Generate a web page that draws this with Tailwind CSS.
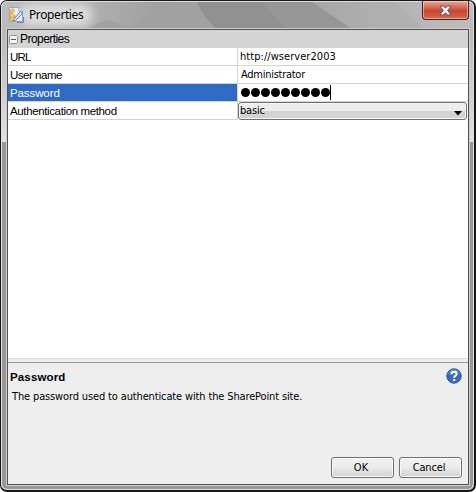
<!DOCTYPE html>
<html lang="en">
<head>
<meta charset="utf-8">
<title>Properties</title>
<script src="https://cdn.jsdelivr.net/npm/@tailwindcss/browser@4"></script>
</head>
<body class="w-[476px] h-[492px] overflow-hidden bg-white text-black font-['DejaVu_Sans_Condensed','DejaVu_Sans',sans-serif] [font-stretch:condensed] text-[11px]">
<div class="relative isolate w-[476px] h-[492px] rounded-[7px] border border-[#171717] border-r-2 border-b-2 overflow-hidden flex flex-col bg-[#999]">
  <!-- glass frame -->
  <svg class="absolute inset-0 -z-10" width="473" height="489" viewBox="1 1 473 489">
    <defs>
      <linearGradient id="top" x1="0" x2="1"><stop offset="0" stop-color="#bcbcbc"/><stop offset=".22" stop-color="#acacac"/><stop offset=".4" stop-color="#999"/><stop offset=".62" stop-color="#959595"/><stop offset=".8" stop-color="#b2b2b2"/><stop offset="1" stop-color="#bdbdbd"/></linearGradient>
      <linearGradient id="side" x1="0" x2="0" y1="0" y2="1"><stop offset="0" stop-color="#b8b8b8"/><stop offset="1" stop-color="#e3e1e1"/></linearGradient>
      <filter id="soft" x="-20%" y="-50%" width="140%" height="200%"><feGaussianBlur stdDeviation="5"/></filter>
    </defs>
    <rect width="476" height="30" fill="url(#top)"/>
    <path d="M85 29 106 20 130 26 155 12 176 2 197 2 215 29Z" fill="#a1a1a1"/>
    <path d="M197 2H262L285 29H217Q203 17 197 2Z" fill="#909090"/>
    <path d="M262 2H312L352 29H285Z" fill="#969696"/>
    <path d="M312 2H395L425 29H352Z" fill="#adadad" opacity=".65"/>
    <rect x="20" y="4" width="72" height="22" rx="9" fill="#dedede" filter="url(#soft)"/>
    <path d="M1 29H8V142H1ZM468 29H475V142H468Z" fill="url(#side)"/>
    <path d="M1 142H8V492H1ZM468 142H475V492H468ZM1 484H475V492H1Z" fill="#999797"/>
    <path d="M1.500 484V8Q2 1.500 8 1.500H468Q473.500 2 473.500 8V483Q473 489.500 467 489.500H8Q2 489 1.500 484" fill="none" stroke="#dedede"/>
    <path d="M6.500 28.500H469.500V485.500H6.500Z" fill="none" stroke="#cecece"/>
  </svg>

  <header class="h-[28px] shrink-0 flex justify-between pl-[7px]">
    <div class="flex pt-[5px]">
      <svg width="17" height="18" viewBox="0 0 17 18">
        <path d="M1.500 1.500H11L14.500 5V15.500H1.500Z" fill="#e7edf8" stroke="#9aa5c2"/>
        <path d="M11 1.500V5H14.500" fill="#fff" stroke="#8797c1"/>
        <path d="M2 4 5 2 7 5 5 7 8 10 6 13 8 15H2Z" fill="#f3ad4e"/>
        <path d="M3 6 5 4M3 10 6 8M3 14 6 12" stroke="#ffe0a3"/>
        <path d="M5.500 13.500 12.500 5.500 14.500 7.500 7.500 14.500 5 15Z" fill="#dce7fa" stroke="#6478a5"/>
        <path d="M9 16.500H15.500V11" fill="none" stroke="#7785a9"/>
      </svg>
      <span class="ml-[4px] mt-[1px] leading-[16px] text-[12px] tracking-[-0.4px] font-['Noto_Sans',sans-serif]">Properties</span>
    </div>
    <button class="w-[47px] h-[19px] mr-[5px] rounded-b-[4px] border border-t-0 border-[#4c211d] bg-linear-to-b from-[#e9a89b] from-0% via-[#c8442d] via-55% to-[#d9694e] shadow-[inset_0_0_0_1px_#ffffff70] flex items-center justify-center">
      <svg width="13" height="11" viewBox="0 0 13 11"><path d="M1.500 1H4.500L6.500 3.200 8.500 1H11.500V2L8.600 5.400 11.500 9V10H8.500L6.500 7.700 4.500 10H1.500V9L4.400 5.400 1.500 2Z" fill="#f8f8f8" stroke="#555866"/></svg>
    </button>
  </header>

  <main class="ml-[6px] w-[462px] h-[456px] shrink-0 border border-[#505050] bg-white flex flex-col">
    <div class="h-[18px] shrink-0 bg-[#d4d4d4] flex items-center pl-[1px] font-['Liberation_Sans',Arial,sans-serif] text-[12px]">
      <svg width="9" height="9" viewBox="0 0 9 9"><rect x=".5" y=".5" width="8" height="8" rx="1" fill="#f4f4f4" stroke="#929292"/><path d="M2 4.500H7" stroke="#3f5d9c"/></svg>
      <span class="ml-[2px] tracking-[-0.55px]">Properties</span>
    </div>
    <div class="shrink-0 grid grid-cols-[229px_1px_230px] auto-rows-[18px] leading-[17px]">
      <div class="border-b border-[#d4d4d4] pl-[2px] pt-px font-['Liberation_Sans',Arial,sans-serif] text-[11.500px] tracking-[-0.8px]">URL</div><div class="bg-[#d4d4d4]"></div><div class="border-b border-[#d4d4d4] pl-[2px] tracking-[0.05px]">http://wserver2003</div>
      <div class="border-b border-[#d4d4d4] pl-[2px] pt-px font-['Liberation_Sans',Arial,sans-serif] text-[11.500px] tracking-[-0.48px]">User name</div><div class="bg-[#d4d4d4]"></div><div class="border-b border-[#d4d4d4] pl-[3px] tracking-[-0.27px]">Administrator</div>
      <div class="border-b border-[#d4d4d4] pl-[2px] pt-px bg-[#316ac5] bg-clip-padding text-white font-['Liberation_Sans',Arial,sans-serif] text-[11.500px] tracking-[-0.1px]">Password</div><div class="bg-[#d4d4d4]"></div>
      <div class="border-b border-[#d4d4d4] pl-[3px] flex items-center gap-[1.500px]">
        <i class="size-[8.500px] rounded-full bg-black"></i><i class="size-[8.500px] rounded-full bg-black"></i><i class="size-[8.500px] rounded-full bg-black"></i><i class="size-[8.500px] rounded-full bg-black"></i><i class="size-[8.500px] rounded-full bg-black"></i><i class="size-[8.500px] rounded-full bg-black"></i><i class="size-[8.500px] rounded-full bg-black"></i><i class="size-[8.500px] rounded-full bg-black"></i><i class="size-[8.500px] rounded-full bg-black"></i>
        <i class="w-px h-[15px] -ml-px bg-black"></i>
      </div>
      <div class="border-b border-[#d4d4d4] pl-[2px] pt-px font-['Liberation_Sans',Arial,sans-serif] text-[11.500px] tracking-[-0.37px]">Authentication method</div><div class="bg-[#d4d4d4]"></div>
      <div class="h-[18px] w-[229px] border border-[#707070] rounded-[3px] bg-linear-to-b from-[#ededed] from-50% to-[#d3d3d3] to-50% shadow-[inset_0_0_0_1px_#f5f5f5] flex justify-between pl-px pr-[4px] leading-[15px]">
        <span class="tracking-[-0.2px]">basic</span><svg class="mt-[8px]" width="8" height="5" viewBox="0 0 8 5"><path d="M0 0H8L4 4.500Z"/></svg>
      </div>
    </div>
    <div class="grow"></div>
    <section class="relative h-[126px] shrink-0 bg-[#eee] border-t border-[#dedede] flex flex-col">
      <div class="h-[4px] shrink-0 border-b border-[#999]"></div>
      <div class="flex justify-between pl-[2px] pr-[6px] pt-[5px]">
        <h2 class="mt-[1px] leading-[16px] font-['Liberation_Sans',Arial,sans-serif] font-bold text-[11.500px] tracking-[0.15px]">Password</h2>
        <svg width="16" height="16" viewBox="0 0 16 16"><defs><linearGradient id="help" x1="0" x2="0" y1="0" y2="1"><stop stop-color="#6f9bdc"/><stop offset=".5" stop-color="#3467bd"/><stop offset="1" stop-color="#4275cb"/></linearGradient></defs><circle cx="8" cy="8" r="7.200" fill="url(#help)" stroke="#2a4d91"/><path d="M5.500 6.200Q5.500 3.800 8.100 3.800 10.600 3.800 10.600 6 10.600 7.200 9.300 7.900 8.200 8.500 8.200 9.800" fill="none" stroke="#fff" stroke-width="1.900"/><rect x="7.200" y="11" width="2" height="2" fill="#fff"/></svg>
      </div>
      <p class="pl-[4px] mt-[4px] leading-[16px] whitespace-nowrap tracking-[-0.14px]">The password used to authenticate with the SharePoint site.</p>
      <div class="mt-auto mb-[6px] mr-[6px] flex justify-end gap-[5px]">
        <button class="w-[63px] h-[21px] rounded-[3px] border border-[#707070] bg-linear-to-b from-[#f2f2f2] from-0% via-[#ebebeb] via-50% to-[#d0d0d0] shadow-[inset_0_0_0_1px_#fafafa] leading-[18px] pr-[3px]">OK</button>
        <button class="w-[63px] h-[21px] rounded-[3px] border border-[#707070] bg-linear-to-b from-[#f2f2f2] from-0% via-[#ebebeb] via-50% to-[#d0d0d0] shadow-[inset_0_0_0_1px_#fafafa] leading-[18px] pr-[3px] tracking-[-0.15px]">Cancel</button>
      </div>
    </section>
  </main>
</div>
</body>
</html>
